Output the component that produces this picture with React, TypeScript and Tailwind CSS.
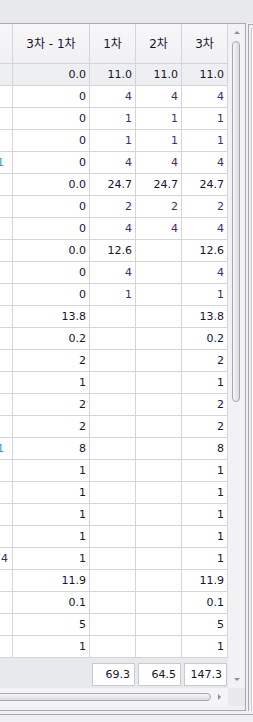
import React from 'react';

type Row = {
  diff: string;
  r1?: string;
  r2?: string;
  r3?: string;
  purple?: boolean;
  group?: boolean;
  clip?: { text: string; pr: string; color: string };
};

const rows: Row[] = [
  { diff: '0.0', r1: '11.0', r2: '11.0', r3: '11.0', group: true },
  { diff: '0', r1: '4', r2: '4', r3: '4', purple: true },
  { diff: '0', r1: '1', r2: '1', r3: '1', purple: true },
  { diff: '0', r1: '1', r2: '1', r3: '1', purple: true },
  { diff: '0', r1: '4', r2: '4', r3: '4', purple: true, clip: { text: '1', pr: 'pr-[8px]', color: 'text-[#2c9cc4]' } },
  { diff: '0.0', r1: '24.7', r2: '24.7', r3: '24.7' },
  { diff: '0', r1: '2', r2: '2', r3: '2', purple: true },
  { diff: '0', r1: '4', r2: '4', r3: '4', purple: true },
  { diff: '0.0', r1: '12.6', r3: '12.6' },
  { diff: '0', r1: '4', r3: '4', purple: true },
  { diff: '0', r1: '1', r3: '1', purple: true },
  { diff: '13.8', r3: '13.8' },
  { diff: '0.2', r3: '0.2' },
  { diff: '2', r3: '2' },
  { diff: '1', r3: '1' },
  { diff: '2', r3: '2' },
  { diff: '2', r3: '2' },
  { diff: '8', r3: '8', clip: { text: '1', pr: 'pr-[8px]', color: 'text-[#2c9cc4]' } },
  { diff: '1', r3: '1' },
  { diff: '1', r3: '1' },
  { diff: '1', r3: '1' },
  { diff: '1', r3: '1' },
  { diff: '1', r3: '1', clip: { text: '74', pr: 'pr-[4px]', color: 'text-[#3e2668]' } },
  { diff: '11.9', r3: '11.9' },
  { diff: '0.1', r3: '0.1' },
  { diff: '5', r3: '5' },
  { diff: '1', r3: '1' },
];

const line = 'border-r border-[#d5d5d9]';

function Cell({ w, children, color }: { w: string; children?: React.ReactNode; color?: string }) {
  return (
    <div className={`${w} ${line} h-full flex items-center justify-end pr-[3px] ${color ?? ''}`}>
      {children}
    </div>
  );
}

function Header() {
  return (
    <div className="h-[40px] flex border-b border-[#d5d5d9] bg-gradient-to-b from-[#f7f7f9] to-[#f1f1f4] text-[12px] font-['DejaVu_Sans','Noto_Sans_CJK_KR',sans-serif]">
      <div className={`w-[13px] ${line}`} />
      <div className={`w-[77px] ${line} flex items-center justify-center`}>3차 - 1차</div>
      <div className={`w-[46px] ${line} flex items-center justify-center`}>1차</div>
      <div className={`w-[46px] ${line} flex items-center justify-center`}>2차</div>
      <div className={`w-[46px] ${line} flex items-center justify-center`}>3차</div>
    </div>
  );
}

function DataRow({ row }: { row: Row }) {
  const p = row.purple ? 'text-[#46286f]' : '';
  return (
    <div className={`h-[22px] flex border-b border-[#d5d5d9] ${row.group ? 'bg-[#eeeff2]' : 'bg-white'}`}>
      <div className={`w-[13px] ${line} h-full overflow-hidden flex items-center justify-end whitespace-nowrap`}>
        {row.clip && <span className={`${row.clip.pr} ${row.clip.color}`}>{row.clip.text}</span>}
      </div>
      <Cell w="w-[77px]">{row.diff}</Cell>
      <Cell w="w-[46px]" color={p}>{row.r1}</Cell>
      <Cell w="w-[46px]" color={p}>{row.r2}</Cell>
      <Cell w="w-[46px]" color={p}>{row.r3}</Cell>
    </div>
  );
}

function Footer() {
  const box = 'ml-[2px] w-[43px] h-[23px] mt-[5px] bg-white border border-[#cacace] flex items-center justify-end pr-[4px]';
  return (
    <div className="h-[30px] flex bg-[#e8e9ed]">
      <div className="w-[90px]" />
      <div className="w-[46px]"><div className={box}>69.3</div></div>
      <div className="w-[46px]"><div className={box}>64.5</div></div>
      <div className="w-[46px]"><div className={box}>147.3</div></div>
    </div>
  );
}

function VScroll() {
  return (
    <div className="w-[17px] bg-[#f2f2f4] flex flex-col">
      <div className="h-[17px] flex items-center justify-center">
        <div className="w-0 h-0 border-l-[3px] border-r-[3px] border-b-[3px] border-l-transparent border-r-transparent border-b-[#8e8e92]" />
      </div>
      <div className="ml-[4px] w-[8px] h-[361px] rounded-full border border-[#a8a8ae] bg-gradient-to-r from-[#f6f6f8] to-[#dcdce0]" />
      <div className="flex-1" />
      <div className="h-[17px] flex items-center justify-center">
        <div className="w-0 h-0 border-l-[3px] border-r-[3px] border-t-[3px] border-l-transparent border-r-transparent border-t-[#8e8e92]" />
      </div>
    </div>
  );
}

function HScroll() {
  return (
    <div className="h-[18px] flex">
      <div className="w-[228px] bg-[#f4f4f6] flex items-center overflow-hidden">
        <div className="-ml-[10px] w-[221px] h-[8px] rounded-full border border-[#a8a8ae] bg-gradient-to-b from-[#f6f6f8] to-[#dcdce0] shrink-0" />
        <div className="flex-1 flex items-center justify-center">
          <div className="w-0 h-0 border-t-[3px] border-b-[3px] border-l-[3px] border-t-transparent border-b-transparent border-l-[#8e8e92]" />
        </div>
      </div>
      <div className="w-[17px] bg-[#e9e9ec]" />
    </div>
  );
}

export default function App() {
  return (
    <div className="w-[253px] h-[722px] overflow-hidden bg-[#f0f0f2] text-[11px] text-[#16142f] font-['DejaVu_Sans',sans-serif] leading-none">
      <div className="h-[23px] bg-[#e8e9ed]" />
      <div className="flex">
        <div className="w-[246px] border-t border-r border-b border-[#aaabb1] flex flex-col">
          <div className="flex">
            <div className="w-[228px] flex flex-col">
              <Header />
              {rows.map((r, i) => (
                <DataRow key={i} row={r} />
              ))}
              <Footer />
            </div>
            <VScroll />
          </div>
          <HScroll />
        </div>
        <div className="w-[2px]" />
        <div className="flex-1 mt-[1px] h-[687px] border-l border-t border-[#aaabb1] bg-[#f0f0f2] pl-[2px] pt-[3px]">
          <div className="h-full border-l border-t border-[#c9c9ce] bg-white" />
        </div>
      </div>
      <div className="h-[3px]" />
      <div className="h-px bg-[#aaabb1]" />
    </div>
  );
}
